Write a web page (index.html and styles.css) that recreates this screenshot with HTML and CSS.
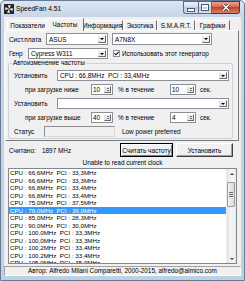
FILE: index.html
```html
<!DOCTYPE html>
<html lang="ru">
<head>
    <meta charset="UTF-8">
    <title>SpeedFan 4.51</title>
    <link rel="stylesheet" href="styles.css">
</head>
<body>
    <div class="window">
        <div class="titlebar">
            <svg class="app-icon" width="10" height="10" viewBox="0 0 10 10">
                <rect width="10" height="10" fill="#262626"/>
                <path d="M5 5 L4 1 L7 1.5 Z M5 5 L9 4 L8.5 7 Z M5 5 L6 9 L3 8.5 Z M5 5 L1 6 L1.5 3 Z" fill="#e8e8e8"/>
            </svg>
            <span class="title">SpeedFan 4.51</span>
            <div class="caption-btns">
                <div class="cap-btn min"><span class="glyph"></span></div>
                <div class="cap-btn max"><span class="glyph"></span></div>
                <div class="cap-btn close">
                    <svg width="8" height="7" viewBox="0 0 8 7">
                        <path d="M1 0.5 L7 6.5 M7 0.5 L1 6.5" stroke="#4a1c14" stroke-width="2.6"/>
                        <path d="M1 0.5 L7 6.5 M7 0.5 L1 6.5" stroke="#fff" stroke-width="1.5"/>
                    </svg>
                </div>
            </div>
        </div>

        <div class="client">
            <div class="tabs">
                <div class="tab">Показатели</div>
                <div class="tab active">Частоты</div>
                <div class="tab">Информация</div>
                <div class="tab">Экзотика</div>
                <div class="tab">S.M.A.R.T.</div>
                <div class="tab">Графики</div>
            </div>

            <div class="tab-page">
                <div class="row board-row">
                    <span class="lbl lbl-board">Сист.плата</span>
                    <div class="combo combo-vendor"><span class="val">ASUS</span><span class="drop"></span></div>
                    <div class="combo combo-model"><span class="val">A7N8X</span><span class="drop"></span></div>
                </div>
                <div class="row gen-row">
                    <span class="lbl lbl-gen">Генр</span>
                    <div class="combo combo-gen"><span class="val">Cypress W311</span><span class="drop"></span></div>
                    <span class="check">
                        <span class="check-box">
                            <svg width="5" height="5" viewBox="0 0 5 5"><path d="M0.5 2.3 L2 3.8 L4.6 0.8" stroke="#000" stroke-width="1.1" fill="none"/></svg>
                        </span>
                        Использовать этот генератор
                    </span>
                </div>

                <fieldset class="group">
                    <legend>Автоизменение частоты</legend>
                    <div class="grow">
                        <span class="lbl lbl-set">Установить</span>
                        <div class="combo combo-freq"><span class="val">CPU : 66,8MHz  PCI : 33,4MHz</span><span class="drop"></span></div>
                    </div>
                    <div class="grow">
                        <span class="lbl lbl-load">при загрузке ниже</span>
                        <div class="spin spin-pct"><span class="val">10</span><span class="arrows"><i class="up"></i><i class="down"></i></span></div>
                        <span class="lbl lbl-pct">% в течение</span>
                        <div class="spin spin-sec"><span class="val">10</span><span class="arrows"><i class="up"></i><i class="down"></i></span></div>
                        <span class="lbl lbl-sec">сек.</span>
                    </div>
                    <div class="grow">
                        <span class="lbl lbl-set">Установить</span>
                        <div class="combo combo-freq"><span class="val"></span><span class="drop"></span></div>
                    </div>
                    <div class="grow">
                        <span class="lbl lbl-load">при загрузке выше</span>
                        <div class="spin spin-pct"><span class="val">40</span><span class="arrows"><i class="up"></i><i class="down"></i></span></div>
                        <span class="lbl lbl-pct">% в течение</span>
                        <div class="spin spin-sec"><span class="val">4</span><span class="arrows"><i class="up"></i><i class="down"></i></span></div>
                        <span class="lbl lbl-sec">сек.</span>
                    </div>
                    <div class="grow">
                        <span class="lbl lbl-status">Статус</span>
                        <div class="status-box"></div>
                        <span class="lbl lbl-pref">Low power preferred</span>
                    </div>
                </fieldset>
            </div>

            <div class="read-row">
                <span class="lbl lbl-read">Считано:</span>
                <span class="lbl">1897 MHz</span>
                <div class="btns">
                    <div class="btn btn-default">Считать частоту</div>
                    <div class="btn btn-set">Установить</div>
                </div>
            </div>

            <div class="msg">Unable to read current clock</div>

            <div class="listbox">
                <div class="items">
                    <div class="item">CPU : 66,6MHz  PCI : 33,3MHz</div>
                    <div class="item">CPU : 66,6MHz  PCI : 33,3MHz</div>
                    <div class="item">CPU : 66,8MHz  PCI : 33,4MHz</div>
                    <div class="item">CPU : 66,8MHz  PCI : 33,4MHz</div>
                    <div class="item">CPU : 75,0MHz  PCI : 37,5MHz</div>
                    <div class="item selected">CPU : 78,0MHz  PCI : 39,0MHz</div>
                    <div class="item">CPU : 85,0MHz  PCI : 28,3MHz</div>
                    <div class="item">CPU : 90,0MHz  PCI : 30,0MHz</div>
                    <div class="item">CPU : 100,0MHz  PCI : 33,3MHz</div>
                    <div class="item">CPU : 100,0MHz  PCI : 33,3MHz</div>
                    <div class="item">CPU : 100,2MHz  PCI : 33,4MHz</div>
                    <div class="item">CPU : 100,2MHz  PCI : 33,4MHz</div>
                    <div class="item">CPU : 105,0MHz  PCI : 35,0MHz</div>
                </div>
                <div class="scrollbar">
                    <div class="sb-btn sb-up"></div>
                    <div class="sb-track"><div class="sb-thumb"><span class="grip"></span></div></div>
                    <div class="sb-btn sb-down"></div>
                </div>
            </div>

            <div class="statusbar">Автор: Alfredo Milani Comparetti, 2000-2015, alfredo@almico.com</div>
        </div>
    </div>
</body>
</html>
```

FILE: styles.css
```css
/* Window frame */
* {
    box-sizing: border-box;
}

body {
    margin: 0;
    background-color: #ffffff;
    font-family: "Liberation Sans", Arial, sans-serif;
    font-size: 6.4px;
    color: #000000;
}

.window {
    width: 245px;
    height: 281px;
    display: flex;
    flex-direction: column;
    padding: 0 3px 4px 3px;
    border: 1px solid #687b92;
    border-radius: 5px 5px 0 0;
    background: linear-gradient(#dbe6f2, #c6d6e8 16px, #bfd0e3);
}

.titlebar {
    height: 16px;
    display: flex;
    align-items: flex-start;
}

.app-icon {
    margin: 3px 2px 0 0;
}

.title {
    font-size: 6.6px;
    line-height: 16px;
}

.caption-btns {
    display: flex;
    margin-left: auto;
    margin-right: 1px;
}

.cap-btn {
    height: 13px;
    display: flex;
    align-items: center;
    justify-content: center;
    border: 1px solid #5b6d84;
    background: linear-gradient(#e9f0f7, #d2deeb 50%, #bccde0 50%, #d5e1ee);
}

.cap-btn.min {
    width: 15px;
    border-right: 0;
    border-radius: 0 0 0 3px;
}

.cap-btn.max {
    width: 14px;
}

.cap-btn.close {
    width: 28px;
    border-left: 0;
    border-color: #6c2a20;
    border-radius: 0 0 3px 0;
    background: linear-gradient(#e6a596, #d2634f 50%, #c3412b 50%, #d8826c);
}

.min .glyph {
    width: 6px;
    height: 2px;
    margin-top: 4px;
    background: #fff;
    outline: 1px solid #4b5b6e;
}

.max .glyph {
    width: 6px;
    height: 5px;
    border: 1px solid #fff;
    border-top-width: 2px;
    outline: 1px solid #4b5b6e;
}

/* Client area */
.client {
    flex: 1;
    display: flex;
    flex-direction: column;
    padding-top: 1px;
    background-color: #f0f0f0;
}

.tabs {
    height: 12px;
    display: flex;
    align-items: flex-end;
    margin: 0 2px 0 1px;
    padding-left: 2px;
}

.tab {
    height: 10px;
    line-height: 9px;
    text-align: center;
    border: 1px solid;
    border-bottom: 0;
    border-color: #ffffff #6d6d6d transparent #ffffff;
    background-color: #f0f0f0;
}

.tab:nth-child(1) { width: 41px; }
.tab:nth-child(2) { width: 34px; }
.tab:nth-child(3) { width: 41px; }
.tab:nth-child(4) { width: 34px; }
.tab:nth-child(5) { width: 38px; }
.tab:nth-child(6) { width: 35px; }

.tab.active {
    width: 38px;
    height: 13px;
    margin: 0 -2px -1px -2px;
    line-height: 11px;
    position: relative;
    z-index: 1;
}

.tab-page {
    height: 111px;
    margin: 0 2px 0 1px;
    padding: 2px 0 0 2px;
    border: 1px solid;
    border-color: #ffffff #7a7a7a #7a7a7a #ffffff;
}

.row {
    display: flex;
    align-items: center;
    padding-left: 1px;
}

.board-row {
    height: 12px;
}

.gen-row {
    height: 11px;
    margin-top: 3px;
}

.lbl {
    white-space: nowrap;
    flex: none;
}

.lbl-board { width: 37px; }
.lbl-gen { width: 19px; }

/* Combo boxes */
.combo {
    height: 100%;
    display: flex;
    flex: none;
    background-color: #ffffff;
    border: 1px solid #8c8f95;
}

.combo .val {
    flex: 1;
    padding-left: 2px;
    white-space: pre;
    display: flex;
    align-items: center;
}

.combo .drop {
    width: 8px;
    margin: 1px;
    display: flex;
    align-items: center;
    justify-content: center;
    border: 1px solid;
    border-color: #ffffff #6a6a6a #6a6a6a #e0e0e0;
    background-color: #ededed;
}

.combo .drop::after {
    content: "";
    border-left: 2px solid transparent;
    border-right: 2px solid transparent;
    border-top: 2px solid #000000;
}

.combo-vendor { width: 62px; }
.combo-model { width: 100px; margin-left: 4px; }
.combo-gen { width: 80px; }
.combo-freq { width: 172px; }

.check {
    display: flex;
    align-items: center;
    margin-left: 5px;
    white-space: nowrap;
}

.check-box {
    width: 7px;
    height: 7px;
    margin-right: 2px;
    display: flex;
    align-items: center;
    justify-content: center;
    background-color: #ffffff;
    border: 1px solid #8c8f95;
}

/* Group box */
.group {
    width: 225px;
    margin: 1px 0 0 0;
    padding: 4px 3px 1px 5px;
    min-width: 0;
    border: 1px solid #c9d2da;
    border-radius: 2px;
}

.group legend {
    margin-left: -2px;
    padding: 0 1px;
    line-height: 6px;
}

.grow {
    height: 11px;
    display: flex;
    align-items: center;
}

.grow + .grow {
    margin-top: 3px;
}

.lbl-set { width: 43px; }
.lbl-load { width: 77px; padding-left: 11px; }
.lbl-pct { width: 52px; margin-left: 5px; }
.lbl-sec { margin-left: 4px; }
.lbl-status { width: 30px; }
.lbl-pref { margin-left: 7px; }

/* Spin boxes */
.spin {
    height: 100%;
    display: flex;
    flex: none;
    background-color: #ffffff;
    border: 1px solid #8c8f95;
}

.spin .val {
    flex: 1;
    padding-left: 1px;
    display: flex;
    align-items: center;
}

.spin .arrows {
    width: 7px;
    margin: 1px;
    display: flex;
    flex-direction: column;
    border: 1px solid;
    border-color: #ffffff #6a6a6a #6a6a6a #e0e0e0;
    background-color: #e4e4e4;
}

.spin .arrows i {
    flex: 1;
    display: flex;
    align-items: center;
    justify-content: center;
}

.spin .up::after {
    content: "";
    border-left: 1.5px solid transparent;
    border-right: 1.5px solid transparent;
    border-bottom: 1.5px solid #000000;
}

.spin .down::after {
    content: "";
    border-left: 1.5px solid transparent;
    border-right: 1.5px solid transparent;
    border-top: 1.5px solid #000000;
}

.spin-pct { width: 22px; }
.spin-sec { width: 26px; }

.status-box {
    width: 71px;
    height: 100%;
    flex: none;
    border: 1px solid;
    border-color: #8f8f8f #d8d8d8 #d8d8d8 #8f8f8f;
}

/* Clock read row */
.read-row {
    height: 14px;
    margin-top: 2px;
    padding-left: 5px;
    display: flex;
    align-items: center;
}

.lbl-read { width: 33px; }

.btns {
    display: flex;
    gap: 3px;
    height: 100%;
    margin-left: auto;
    margin-right: 8px;
}

.btn {
    height: 100%;
    display: flex;
    align-items: center;
    justify-content: center;
    border: 1px solid;
    border-color: #ffffff #404040 #404040 #ffffff;
    box-shadow: inset -1px -1px #a0a0a0;
    background-color: #f0f0f0;
}

.btn-default {
    width: 53px;
    border-color: #000000;
    box-shadow: inset 1px 1px #ffffff, inset -1px -1px #808080;
}

.btn-set {
    width: 57px;
}

.msg {
    height: 9px;
    margin-top: 1px;
    line-height: 9px;
    text-align: center;
}

/* List box */
.listbox {
    height: 96px;
    margin: 1px 4px 0 4px;
    display: flex;
    border: 1px solid #828790;
    background-color: #ffffff;
}

.items {
    flex: 1;
    overflow: hidden;
    font-size: 6.2px;
}

.item {
    height: 7.5px;
    line-height: 7.5px;
    padding-left: 1px;
    white-space: pre;
}

.item.selected {
    background-color: #3399ff;
    color: #ffffff;
}

.scrollbar {
    width: 10px;
    display: flex;
    flex-direction: column;
    background: linear-gradient(90deg, #e3e3e3, #f4f4f4 40%, #f4f4f4 70%, #e8e8e8);
    border-left: 1px solid #ececec;
}

.sb-btn {
    height: 9px;
    display: flex;
    align-items: center;
    justify-content: center;
}

.sb-up::after {
    content: "";
    border-left: 2px solid transparent;
    border-right: 2px solid transparent;
    border-bottom: 2px solid #3c3c3c;
}

.sb-down::after {
    content: "";
    border-left: 2px solid transparent;
    border-right: 2px solid transparent;
    border-top: 2px solid #3c3c3c;
}

.sb-track {
    flex: 1;
}

.sb-thumb {
    height: 25px;
    margin: 4px 1px 0 0;
    display: flex;
    align-items: center;
    justify-content: center;
    border: 1px solid #9b9b9b;
    border-radius: 1px;
    background: linear-gradient(90deg, #f3f3f3, #e6e6e6 50%, #d8d8d8);
}

.grip {
    width: 4px;
    height: 5px;
    background: repeating-linear-gradient(#6d6d6d 0 1px, transparent 1px 2px);
}

.statusbar {
    height: 10px;
    margin-top: 2px;
    line-height: 8px;
    text-align: center;
    white-space: nowrap;
    border: 1px solid;
    border-color: #a0a0a0 #ffffff #ffffff #a0a0a0;
}
```
